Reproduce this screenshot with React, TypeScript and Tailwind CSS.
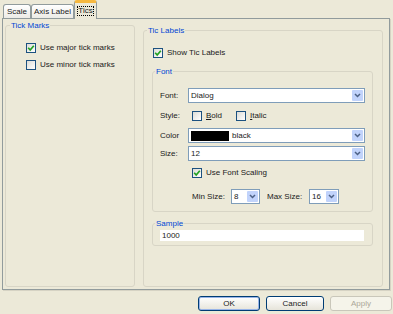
import {FC, ReactNode} from 'react'
import clsx from 'clsx'

const Check: FC<{checked?: boolean}> = ({checked}) => (
  <span className="flex h-[10px] w-[10px] shrink-0 items-center justify-center border border-[#1C5180] bg-linear-to-br from-[#DCDCD7] to-white">
    {checked && (
      <svg width="8" height="8" viewBox="0 0 8 8">
        <path d="M1.2 3.8 L3.2 6 L6.8 1.8" fill="none" stroke="#21A121" strokeWidth="1.7" />
      </svg>
    )}
  </span>
)

const CheckRow: FC<{checked?: boolean; className?: string; children: ReactNode}> = ({checked, className, children}) => (
  <div className={clsx('flex h-[10px] items-center gap-[4px]', className)}>
    <Check checked={checked} />
    <span>{children}</span>
  </div>
)

const Group: FC<{title: string; className?: string; titleClass?: string; children?: ReactNode}> = ({
  title,
  className,
  titleClass,
  children,
}) => (
  <div className={clsx('relative rounded-[3px] border border-[#D8D5C6]', className)}>
    <span className={clsx('absolute -top-[6px] bg-[#ECE9D8] px-[1px] leading-[11px] text-[#0046D5]', titleClass)}>
      {title}
    </span>
    {children}
  </div>
)

const Combo: FC<{className?: string; children?: ReactNode}> = ({className, children}) => (
  <div className={clsx('flex h-[15px] border border-[#7F9DB9] bg-white', className)}>
    <div className="flex flex-1 items-center gap-[3px] overflow-hidden pl-[2px]">{children}</div>
    <div className="m-px flex w-[11px] items-center justify-center rounded-[1px] bg-[#C1D3FB]">
      <svg width="7" height="5" viewBox="0 0 7 5">
        <path d="M1 1 L3.5 3.5 L6 1" fill="none" stroke="#4D6185" strokeWidth="1.5" />
      </svg>
    </div>
  </div>
)

const Tab: FC<{active?: boolean; className?: string; children: ReactNode}> = ({active, className, children}) => (
  <div
    className={clsx(
      'flex items-center justify-center rounded-t-[3px] border border-b-0 border-[#919B9C]',
      active
        ? 'h-[19px] border-t-[3px] border-t-[#F6B83F] bg-[#ECE9D8]'
        : 'mb-px h-[14px] bg-linear-to-b from-white to-[#ECEBE6]',
      className,
    )}
  >
    {children}
  </div>
)

const Button: FC<{primary?: boolean; disabled?: boolean; className?: string; children: ReactNode}> = ({
  primary,
  disabled,
  className,
  children,
}) => (
  <div
    className={clsx(
      'flex h-[15px] items-center justify-center rounded-[3px] border',
      disabled
        ? 'border-[#C9C7BA] bg-[#F5F4EA] text-[#ACA899]'
        : 'border-[#003C74] bg-linear-to-b from-white to-[#E6E4DA]',
      primary && 'shadow-[inset_0_0_0_1px_#98B4E8]',
      className,
    )}
  >
    {children}
  </div>
)

const App: FC = () => {
  return (
    <div className="h-[314px] w-[393px] overflow-hidden bg-[#ECE9D8] font-['Liberation_Sans',sans-serif] text-[8px] leading-none text-[#1a1a1a]">
      <div className="relative z-10 -mb-px flex h-[19px] items-end pl-[3px]">
        <Tab className="w-[28px]">Scale</Tab>
        <Tab className="w-[43px]">Axis Label</Tab>
        <Tab active className="w-[23px]">
          <span className="outline-1 outline-dotted outline-black">Tics</span>
        </Tab>
      </div>

      <div className="ml-[2px] flex h-[272px] w-[388px] items-start border border-[#919B9C] shadow-[1px_1px_0_#D6D3C4]">
        <Group title="Tick Marks" className="ml-[2px] mt-[6px] h-[262px] w-[130px] pl-[20px] pt-[17px]" titleClass="left-[4px]">
          <CheckRow checked>Use major tick marks</CheckRow>
          <CheckRow className="mt-[7px]">Use minor tick marks</CheckRow>
        </Group>

        <Group title="Tic Labels" className="ml-[8px] mt-[11px] h-[257px] w-[240px] pl-[8px] pt-[17px]" titleClass="left-[3px]">
          <CheckRow checked className="ml-[1px]">
            Show Tic Labels
          </CheckRow>

          <Group title="Font" className="mt-[13px] h-[141px] w-[221px] pl-[7px] pt-[16px]" titleClass="left-[2px]">
            <div className="flex items-center">
              <span className="w-[28px]">Font:</span>
              <Combo className="w-[177px]">Dialog</Combo>
            </div>
            <div className="mt-[8px] flex h-[10px] items-center">
              <span className="w-[28px]">Style:</span>
              <CheckRow className="ml-[4px]">
                <span className="underline">B</span>old
              </CheckRow>
              <CheckRow className="ml-[14px]">
                <span className="underline">I</span>talic
              </CheckRow>
            </div>
            <div className="mt-[7px] flex items-center">
              <span className="w-[28px]">Color</span>
              <Combo className="w-[177px]">
                <span className="h-[10px] w-[38px] bg-black" />
                black
              </Combo>
            </div>
            <div className="mt-[3px] flex items-center">
              <span className="w-[28px]">Size:</span>
              <Combo className="w-[177px]">12</Combo>
            </div>
            <CheckRow checked className="ml-[32px] mt-[7px]">
              Use Font Scaling
            </CheckRow>
            <div className="ml-[32px] mt-[11px] flex items-center">
              <span className="w-[39px]">Min Size:</span>
              <Combo className="w-[29px]">8</Combo>
              <span className="ml-[7px] w-[42px]">Max Size:</span>
              <Combo className="w-[30px]">16</Combo>
            </div>
          </Group>

          <Group title="Sample" className="mt-[11px] h-[23px] w-[221px] pl-[7px] pt-[6px]" titleClass="left-[2px]">
            <div className="flex h-[11px] w-[204px] items-center bg-white pl-[2px]">1000</div>
          </Group>
        </Group>
      </div>

      <div className="mt-[6px] flex justify-end gap-[6px] pr-[1px]">
        <Button primary className="w-[62px]">
          OK
        </Button>
        <Button className="w-[58px]">Cancel</Button>
        <Button disabled className="w-[62px]">
          Apply
        </Button>
      </div>
    </div>
  )
}

export default App
